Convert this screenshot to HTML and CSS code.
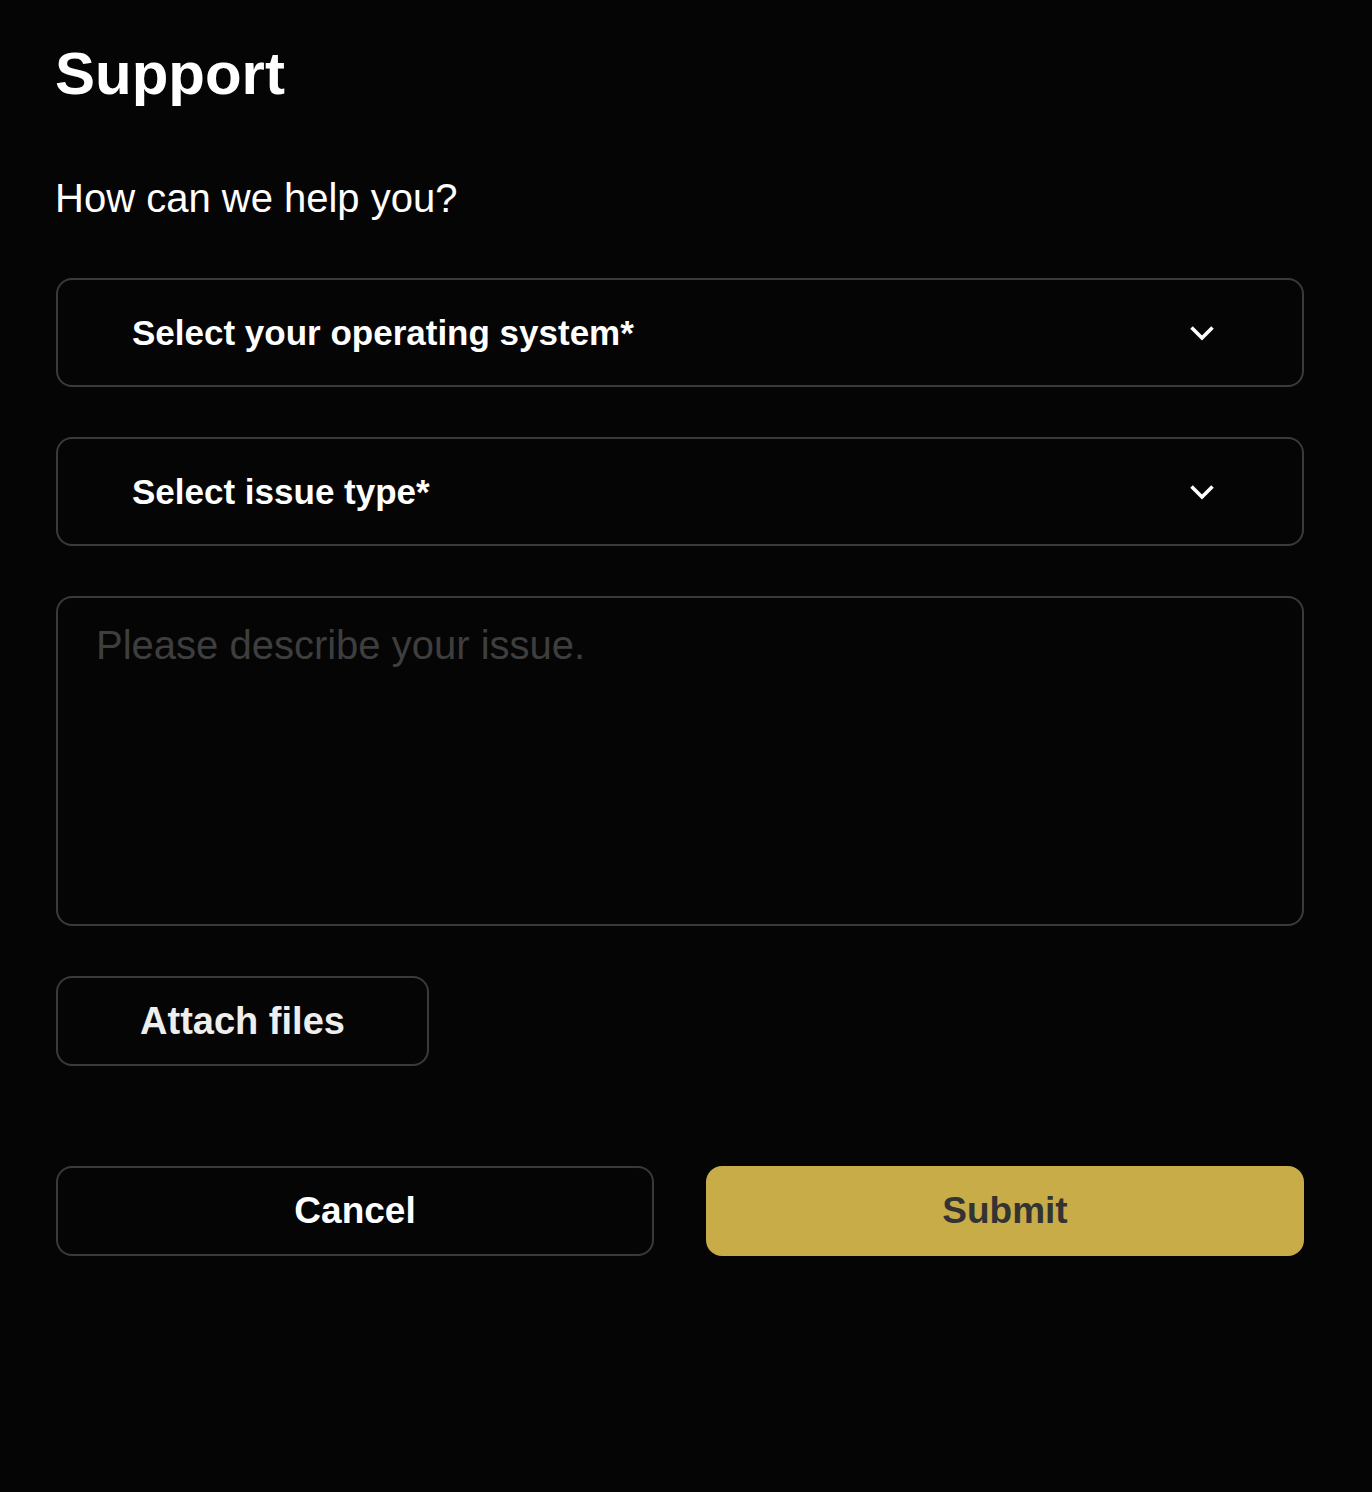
FILE: index.html
```html
<!DOCTYPE html>
<html lang="en">
<head>
<meta charset="utf-8">
<title>Support</title>
<link rel="stylesheet" href="styles.css">
</head>
<body>
<main class="page">
  <h1 class="title">Support</h1>
  <p class="subtitle">How can we help you?</p>
  <form class="form">
    <div class="select">
      <span class="select-label">Select your operating system*</span>
      <svg class="chevron" viewBox="0 0 26 16" width="26" height="16" aria-hidden="true"><path d="M2.5 2.5 L13 13 L23.5 2.5" fill="none" stroke="#fff" stroke-width="3.6" stroke-linecap="butt" stroke-linejoin="miter"/></svg>
    </div>
    <div class="select">
      <span class="select-label">Select issue type*</span>
      <svg class="chevron" viewBox="0 0 26 16" width="26" height="16" aria-hidden="true"><path d="M2.5 2.5 L13 13 L23.5 2.5" fill="none" stroke="#fff" stroke-width="3.6" stroke-linecap="butt" stroke-linejoin="miter"/></svg>
    </div>
    <textarea class="description" placeholder="Please describe your issue."></textarea>
    <button type="button" class="btn btn-attach">Attach files</button>
    <div class="actions">
      <button type="button" class="btn btn-cancel">Cancel</button>
      <button type="submit" class="btn btn-submit">Submit</button>
    </div>
  </form>
</main>
</body>
</html>
```

FILE: styles.css
```css
html, body {
  margin: 0;
  padding: 0;
  background: #050505;
}

body {
  font-family: "Liberation Sans", Arial, sans-serif;
  color: #fff;
}

.page {
  padding: 39px 68px 0 56px;
}

.title {
  margin: 0 0 0 -1px;
  font-size: 60px;
  line-height: 69px;
  font-weight: 700;
  color: #fff;
}

.subtitle {
  margin: 67px 0 0 -1px;
  font-size: 40px;
  line-height: 46px;
  font-weight: 400;
  color: #fff;
}

.form {
  margin-top: 57px;
  display: flex;
  flex-direction: column;
  gap: 50px;
}

.select {
  box-sizing: border-box;
  height: 109px;
  border: 2px solid #3a3a3a;
  border-radius: 16px;
  display: flex;
  align-items: center;
  justify-content: space-between;
  padding: 0 87px 0 74px;
}

.select-label {
  font-size: 35px;
  font-weight: 700;
  color: #fff;
}

.chevron {
  display: block;
}

.description {
  box-sizing: border-box;
  height: 330px;
  width: 100%;
  background: transparent;
  border: 2px solid #3a3a3a;
  border-radius: 16px;
  padding: 24px 38px;
  font-family: "Liberation Sans", Arial, sans-serif;
  font-size: 40px;
  line-height: 46px;
  color: #fff;
  resize: none;
  outline: none;
  margin: 0;
  display: block;
}

.description::placeholder {
  color: #3e3e3e;
  opacity: 1;
}

.btn {
  box-sizing: border-box;
  height: 90px;
  border-radius: 16px;
  font-family: "Liberation Sans", Arial, sans-serif;
  font-size: 37px;
  font-weight: 700;
  cursor: pointer;
  padding: 0;
  margin: 0;
}

.btn-attach {
  align-self: flex-start;
  width: 373px;
  background: transparent;
  border: 2px solid #3a3a3a;
  color: #eeeeee;
  font-size: 38px;
}

.actions {
  margin-top: 50px;
  display: grid;
  grid-template-columns: 1fr 1fr;
  gap: 52px;
}

.btn-cancel {
  background: transparent;
  border: 2px solid #3a3a3a;
  color: #fff;
}

.btn-submit {
  background: #c8ac48;
  border: 2px solid #c8ac48;
  color: #333333;
}
```
